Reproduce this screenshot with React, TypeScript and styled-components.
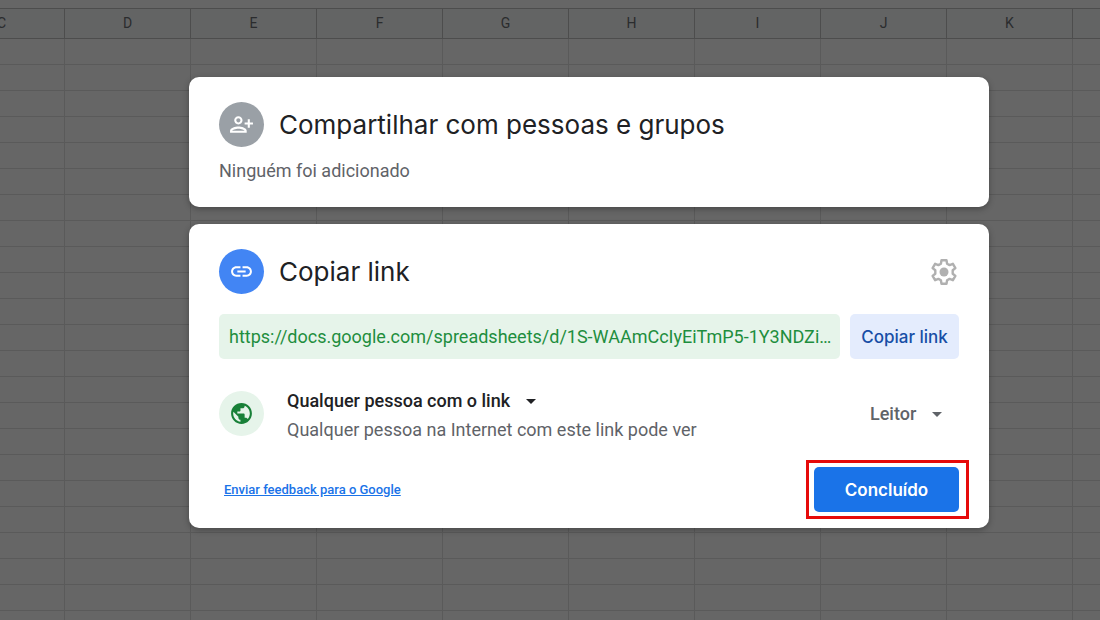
import React from 'react';
import styled, { createGlobalStyle } from 'styled-components';
import { MdArrowDropDown, MdLink, MdPublic } from 'react-icons/md';

const GlobalStyle = createGlobalStyle`
  *, *::before, *::after { box-sizing: border-box; }
  body {
    margin: 0;
    background: #ffffff;
    font-family: Roboto, "Liberation Sans", sans-serif;
    font-size: 18px;
    line-height: 24px;
    color: #202124;
  }
`;

const titleFont = 'Inter, "Open Sans", sans-serif';

const Page = styled.div`
  position: relative;
  height: 100vh;
  overflow: hidden;
`;

const Sheet = styled.table`
  width: 1260px;
  margin: 8px 0 0 -61px;
  table-layout: fixed;
  border-collapse: separate;
  border-spacing: 0;
`;

const ColumnHead = styled.th`
  height: 31px;
  padding: 0 0 2px;
  border: solid #c0c0c0;
  border-width: 1px 1px 1px 0;
  background: #f8f9fa;
  font-size: 14px;
  font-weight: 400;
  line-height: 16px;
  color: #6b6f73;
`;

const Cell = styled.td`
  height: 26px;
  padding: 0;
  border: solid #e0e0e0;
  border-width: 0 1px 1px 0;
`;

const Backdrop = styled.div`
  position: absolute;
  inset: 0;
  padding: 77px 111px 24px 189px;
  background: rgba(0, 0, 0, 0.6);
`;

const Dialog = styled.main`
  display: flex;
  flex-direction: column;
  gap: 17px;
  max-width: 800px;
`;

const Card = styled.section`
  padding: 25px 30px 9px;
  border-radius: 10px;
  background: #ffffff;
  box-shadow: 0 2px 6px rgba(0, 0, 0, 0.3);
`;

const PeopleCard = styled(Card)`
  padding-bottom: 24px;
`;

const CardHeader = styled.header`
  display: flex;
  align-items: center;
  gap: 15px;
`;

const Badge = styled.span<{ $fill: string; $ink: string }>`
  display: flex;
  flex: none;
  align-items: center;
  justify-content: center;
  width: 45px;
  height: 45px;
  border-radius: 50%;
  background: ${(p) => p.$fill};
  color: ${(p) => p.$ink};
`;

const Title = styled.h2`
  flex: 1;
  margin: 0;
  font-family: ${titleFont};
  font-size: 26px;
  font-weight: 400;
  line-height: 36px;
`;

const Note = styled.p`
  margin: 12px 0 0;
  color: #5f6368;
`;

const IconButton = styled.button`
  display: flex;
  padding: 0;
  border: 0;
  background: none;
  color: #b0b0b0;
  cursor: pointer;
`;

const LinkRow = styled.div`
  display: flex;
  gap: 10px;
  margin-top: 20px;
`;

const LinkField = styled.input`
  flex: 1;
  min-width: 0;
  height: 45px;
  padding: 0 4px 0 10px;
  border: 0;
  border-radius: 5px;
  background: #e6f4ea;
  color: #1e8e3e;
  font: inherit;
  text-overflow: ellipsis;
`;

const Button = styled.button<{ $primary?: boolean }>`
  width: ${(p) => (p.$primary ? '145px' : '109px')};
  height: 45px;
  padding: 0;
  border: 0;
  border-radius: 5px;
  background: ${(p) => (p.$primary ? '#1a73e8' : '#e4ecfd')};
  color: ${(p) => (p.$primary ? '#ffffff' : '#174ea6')};
  font-family: ${titleFont};
  font-size: 17px;
  font-weight: ${(p) => (p.$primary ? 600 : 500)};
  cursor: pointer;
`;

const AccessRow = styled.div`
  display: flex;
  align-items: center;
  margin-top: 26px;
`;

const AccessText = styled.div`
  flex: 1;
  margin-left: 23px;
  padding-top: 4px;
`;

const Picker = styled.span<{ $ink: string }>`
  display: inline-grid;
  align-items: center;
  color: ${(p) => p.$ink};

  > * { grid-area: 1 / 1; }
  > svg { justify-self: end; pointer-events: none; }
`;

const Select = styled.select`
  appearance: none;
  height: 24px;
  margin: 0;
  padding: 0 32px 0 0;
  border: 0;
  background: none;
  color: inherit;
  font: inherit;
  font-weight: 500;
  cursor: pointer;
`;

const AccessHint = styled.p`
  margin: 5px 0 0;
  color: #5f6368;
`;

const RoleSlot = styled.div`
  margin-right: 10px;
`;

const Footer = styled.footer`
  display: flex;
  align-items: center;
  justify-content: space-between;
  margin-top: 18px;
  padding-left: 5px;
`;

const FeedbackLink = styled.a`
  color: #1a73e8;
  font-size: 13px;
  font-weight: 500;
  line-height: 16px;
`;

const Highlight = styled.span`
  display: flex;
  margin-right: -10px;
  padding: 4px 7px 4px 5px;
  border: 3px solid #e60a0a;
`;

const PersonAddIcon = () => (
  <svg width="25" height="25" viewBox="0 0 24 24" fill="currentColor" aria-hidden="true">
    <path d="M13 8c0-2.21-1.79-4-4-4S5 5.79 5 8s1.79 4 4 4 4-1.79 4-4zm-2 0c0 1.1-.9 2-2 2s-2-.9-2-2 .9-2 2-2 2 .9 2 2zM1 18v2h16v-2c0-2.66-5.33-4-8-4s-8 1.34-8 4zm2 0c.2-.71 3.3-2 6-2 2.69 0 5.78 1.28 6 2H3zM20 15v-3h3v-2h-3V7h-2v3h-3v2h3v3h2z" />
  </svg>
);

const GearIcon = () => (
  <svg width="30" height="30" viewBox="0 0 30 30" aria-hidden="true">
    <path
      fill="none"
      stroke="currentColor"
      strokeWidth="2.4"
      strokeLinejoin="round"
      d="M12.5 3.2h5l.6 3.500 2.500 1.400 3.300-1.300 2.500 4.300-2.700 2.200v3.400l2.700 2.200-2.500 4.300-3.300-1.300-2.500 1.400-.6 3.500h-5l-.6-3.500-2.500-1.400-3.300 1.300-2.500-4.300 2.700-2.200v-3.400l-2.700-2.200 2.500-4.300 3.300 1.300 2.500-1.400z"
    />
    <circle cx="15" cy="15" r="4.5" fill="currentColor" />
  </svg>
);

const columns = ['C', 'D', 'E', 'F', 'G', 'H', 'I', 'J', 'K', ''];
const rows = Array.from({ length: 24 }, (_, i) => i);

export default function App() {
  return (
    <Page>
      <GlobalStyle />
      <Sheet>
        <thead>
          <tr>
            {columns.map((c) => (
              <ColumnHead key={c} scope="col">{c}</ColumnHead>
            ))}
          </tr>
        </thead>
        <tbody>
          {rows.map((r) => (
            <tr key={r}>
              {columns.map((c) => (
                <Cell key={c} />
              ))}
            </tr>
          ))}
        </tbody>
      </Sheet>
      <Backdrop>
        <Dialog>
          <PeopleCard>
            <CardHeader>
              <Badge $fill="#9aa0a6" $ink="#ffffff"><PersonAddIcon /></Badge>
              <Title>Compartilhar com pessoas e grupos</Title>
            </CardHeader>
            <Note>Ninguém foi adicionado</Note>
          </PeopleCard>
          <Card>
            <CardHeader>
              <Badge $fill="#4285f4" $ink="#ffffff"><MdLink size={25} /></Badge>
              <Title id="copy-title">Copiar link</Title>
              <IconButton type="button" aria-label="Configurações"><GearIcon /></IconButton>
            </CardHeader>
            <LinkRow>
              <LinkField
                readOnly
                aria-labelledby="copy-title"
                value="https://docs.google.com/spreadsheets/d/1S-WAAmCcIyEiTmP5-1Y3NDZi…"
              />
              <Button type="button">Copiar link</Button>
            </LinkRow>
            <AccessRow>
              <Badge $fill="#e6f4ea" $ink="#188038"><MdPublic size={25} /></Badge>
              <AccessText>
                <Picker $ink="#202124">
                  <Select aria-label="Acesso">
                    <option>Qualquer pessoa com o link</option>
                  </Select>
                  <MdArrowDropDown size={24} />
                </Picker>
                <AccessHint>Qualquer pessoa na Internet com este link pode ver</AccessHint>
              </AccessText>
              <RoleSlot>
                <Picker $ink="#5f6368">
                  <Select aria-label="Permissão">
                    <option>Leitor</option>
                  </Select>
                  <MdArrowDropDown size={24} />
                </Picker>
              </RoleSlot>
            </AccessRow>
            <Footer>
              <FeedbackLink href="#feedback">Enviar feedback para o Google</FeedbackLink>
              <Highlight>
                <Button type="button" $primary>Concluído</Button>
              </Highlight>
            </Footer>
          </Card>
        </Dialog>
      </Backdrop>
    </Page>
  );
}
